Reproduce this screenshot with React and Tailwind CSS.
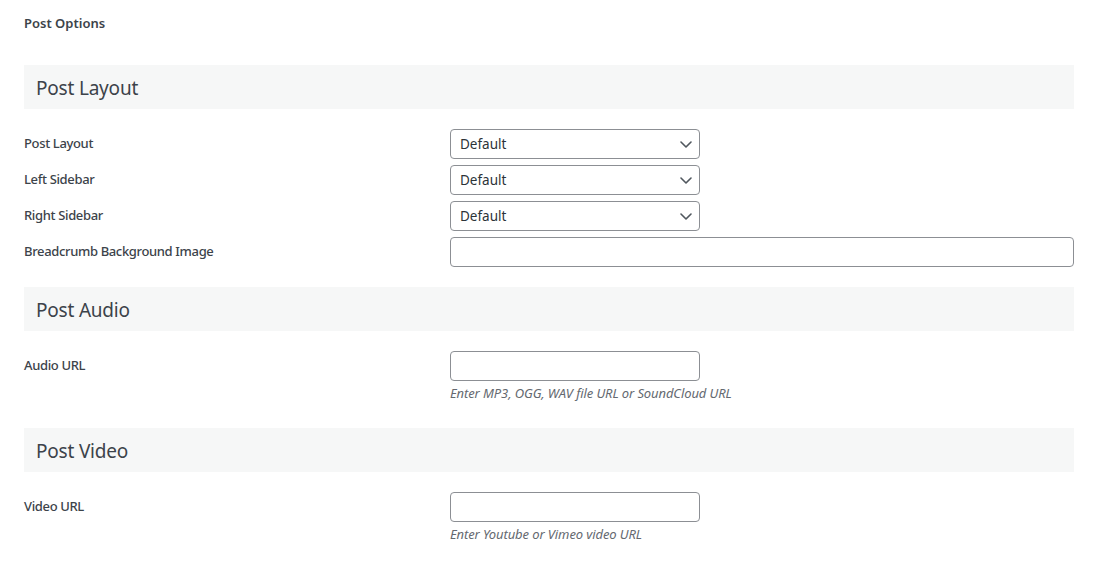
const font = { fontFamily: '"Noto Sans", "Open Sans", sans-serif' };

function Chevron() {
  return (
    <svg
      className="absolute right-[8px] top-[12px] pointer-events-none"
      width="12"
      height="7"
      viewBox="0 0 12 7"
      fill="none"
      stroke="#50575e"
      strokeWidth="1.6"
      strokeLinecap="round"
      strokeLinejoin="round"
    >
      <path d="M1 1l5 5 5-5" />
    </svg>
  );
}

function SectionHeader({ title }) {
  return (
    <div className="h-[44px] bg-[#f6f7f7] px-3 flex items-center">
      <h2 className="text-[19px] font-normal text-[#3c434a] leading-none tracking-[-0.2px] pt-[2px]">{title}</h2>
    </div>
  );
}

function SelectBox() {
  return (
    <div className="relative w-[250px]">
      <select
        defaultValue="default"
        className="appearance-none w-full h-[30px] border border-[#8c8f94] rounded-[4px] bg-white pl-[9px] pr-6 text-[13.5px] text-[#2c3338] outline-none"
      >
        <option value="default">Default</option>
      </select>
      <Chevron />
    </div>
  );
}

function Row({ label, children }) {
  return (
    <div className="flex items-center">
      <label className="w-[426px] shrink-0 text-[13px] font-medium text-[#3c434a] tracking-[-0.35px]">{label}</label>
      <div className="flex-1">{children}</div>
    </div>
  );
}

function TextInput({ wide }) {
  return (
    <input
      type="text"
      className={`h-[30px] border border-[#8c8f94] rounded-[4px] bg-white px-2 text-[14px] outline-none ${wide ? 'w-full' : 'w-[250px]'}`}
    />
  );
}

function FieldWithHelp({ label, help }) {
  return (
    <div className="flex">
      <label className="w-[426px] shrink-0 text-[13px] font-medium text-[#3c434a] tracking-[-0.35px] pt-[5px]">{label}</label>
      <div className="flex flex-col">
        <TextInput />
        <p className="mt-[3px] text-[13px] italic text-[#646970] leading-[18px] tracking-[-0.1px]">{help}</p>
      </div>
    </div>
  );
}

export default function App() {
  return (
    <div className="min-h-screen bg-white pl-6 pr-[26px] pt-[13px]" style={font}>
      <h1 className="text-[13px] font-semibold text-[#3c434a] leading-[20px]">Post Options</h1>

      <div className="mt-[32px]">
        <SectionHeader title="Post Layout" />
        <div className="flex flex-col gap-[6px] mt-5">
          <Row label="Post Layout"><SelectBox /></Row>
          <Row label="Left Sidebar"><SelectBox /></Row>
          <Row label="Right Sidebar"><SelectBox /></Row>
          <Row label="Breadcrumb Background Image"><TextInput wide /></Row>
        </div>
      </div>

      <div className="mt-5">
        <SectionHeader title="Post Audio" />
        <div className="mt-5">
          <FieldWithHelp label="Audio URL" help="Enter MP3, OGG, WAV file URL or SoundCloud URL" />
        </div>
      </div>

      <div className="mt-[26px]">
        <SectionHeader title="Post Video" />
        <div className="mt-5">
          <FieldWithHelp label="Video URL" help="Enter Youtube or Vimeo video URL" />
        </div>
      </div>
    </div>
  );
}
